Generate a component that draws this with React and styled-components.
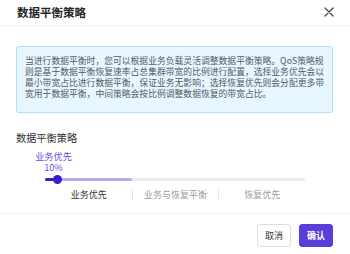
import React from 'react'
import styled, { createGlobalStyle } from 'styled-components'

const GlobalStyle = createGlobalStyle`
  body {
    margin: 0;
    background: #fff;
    font-family: "Noto Sans CJK SC", "Noto Sans", sans-serif;
  }
`

const steps = ['业务优先', '业务与恢复平衡', '恢复优先']

const App = () => {
  return <Dialog>
    <GlobalStyle />
    <Header>
      <Title>数据平衡策略</Title>
      <Close aria-label="close">
        <svg width="10" height="10" viewBox="0 0 10 10">
          <path d="M1 1 L9 9 M9 1 L1 9" stroke="#4a4a4a" strokeWidth="1.4" strokeLinecap="round" />
        </svg>
      </Close>
    </Header>

    <Body>
      <InfoBox>
        <Line>当进行数据平衡时，您可以根据业务负载灵活调整数据平衡策略。QoS策略规</Line>
        <Line>则是基于数据平衡恢复速率占总集群带宽的比例进行配置，选择业务优先会以</Line>
        <Line>最小带宽占比进行数据平衡，保证业务无影响；选择恢复优先则会分配更多带</Line>
        <Line>宽用于数据平衡，中间策略会按比例调整数据恢复的带宽占比。</Line>
      </InfoBox>

      <SectionLabel>数据平衡策略</SectionLabel>

      <Slider>
        <Tip>
          <div>业务优先</div>
          <div>10%</div>
        </Tip>
        <Track>
          <Fill style={{ width: '33.4%' }} />
          <ActiveFill style={{ width: '12px' }} />
          <Thumb style={{ left: '12px' }} />
        </Track>
        <Steps>
          {steps.map((step, index) => (
            <Step key={index} active={index === 0} divider={index > 0}>{step}</Step>
          ))}
        </Steps>
      </Slider>
    </Body>

    <Footer>
      <Button>取消</Button>
      <Button primary>确认</Button>
    </Footer>
  </Dialog>
}

export default App

const Dialog = styled.div`
    width: 350px;
    height: 254px;
    display: flex;
    flex-direction: column;
    background: #fff;
`

const Header = styled.div`
    height: 26px;
    padding: 0 16px 0 17px;
    display: flex;
    align-items: center;
    justify-content: space-between;
    border-bottom: 1px solid #f1f1f3;
    box-sizing: border-box;
`

const Title = styled.div`
    font-size: 11.5px;
    font-weight: 600;
    color: #262626;
    line-height: 14px;
    margin-top: -1px;
`

const Close = styled.div`
    width: 10px;
    height: 10px;
    display: grid;
    place-items: center;
    margin-top: -1px;
`

const Body = styled.div`
    flex: 1;
    padding: 20px 17px 0 16px;
`

const InfoBox = styled.div`
    height: 67px;
    box-sizing: border-box;
    padding: 8px 8px 0 8px;
    border: 1px solid #b3dffa;
    border-radius: 3px;
    background: #e7f6ff;
    color: #555a63;
    font-size: 8.8px;
    line-height: 11px;
`

const Line = styled.div`
    white-space: nowrap;
`

const SectionLabel = styled.div`
    margin-top: 19px;
    font-size: 10.2px;
    line-height: 12px;
    color: #333;
`

const Slider = styled.div`
    margin: 7px 0 0 29px;
    width: 260px;
`

const Tip = styled.div`
    width: 37px;
    margin-left: -10px;
    text-align: center;
    color: #6a4ee0;
    font-size: 9.2px;
    line-height: 11px;
`

const Track = styled.div`
    position: relative;
    height: 3px;
    margin-top: 5px;
    border-radius: 2px;
    background: #e8ecf4;
`

const Fill = styled.div`
    position: absolute;
    left: 0;
    top: 0;
    height: 3px;
    border-radius: 2px;
    background: #b8a8f4;
`

const ActiveFill = styled.div`
    position: absolute;
    left: 0;
    top: 0;
    height: 3px;
    border-radius: 2px;
    background: #3a1fc8;
`

const Thumb = styled.div`
    position: absolute;
    top: -3px;
    width: 9px;
    height: 9px;
    margin-left: -4.5px;
    border-radius: 50%;
    background: #3a1fc8;
`

const Steps = styled.div`
    display: grid;
    grid-template-columns: repeat(3, 1fr);
    margin-top: 8px;
`

const Step = styled.div`
    text-align: center;
    font-size: 9px;
    line-height: 11px;
    color: ${p => p.active ? '#333' : '#9a9ca3'};
    border-left: ${p => p.divider ? '1px solid #e3e5ea' : '1px solid transparent'};
`

const Footer = styled.div`
    height: 41px;
    box-sizing: border-box;
    border-top: 1px solid #f1f1f3;
    display: flex;
    align-items: flex-start;
    justify-content: flex-end;
    gap: 8px;
    padding: 10px 17px 0 0;
`

const Button = styled.div`
    height: 23px;
    box-sizing: border-box;
    padding: 0 7px;
    display: grid;
    place-items: center;
    border-radius: 3px;
    font-size: 9px;
    font-weight: ${p => p.primary ? 600 : 400};
    color: ${p => p.primary ? '#fff' : '#333'};
    background: ${p => p.primary ? '#5b3dd8' : '#fff'};
    border: 1px solid ${p => p.primary ? '#5b3dd8' : '#dcdde2'};
`
